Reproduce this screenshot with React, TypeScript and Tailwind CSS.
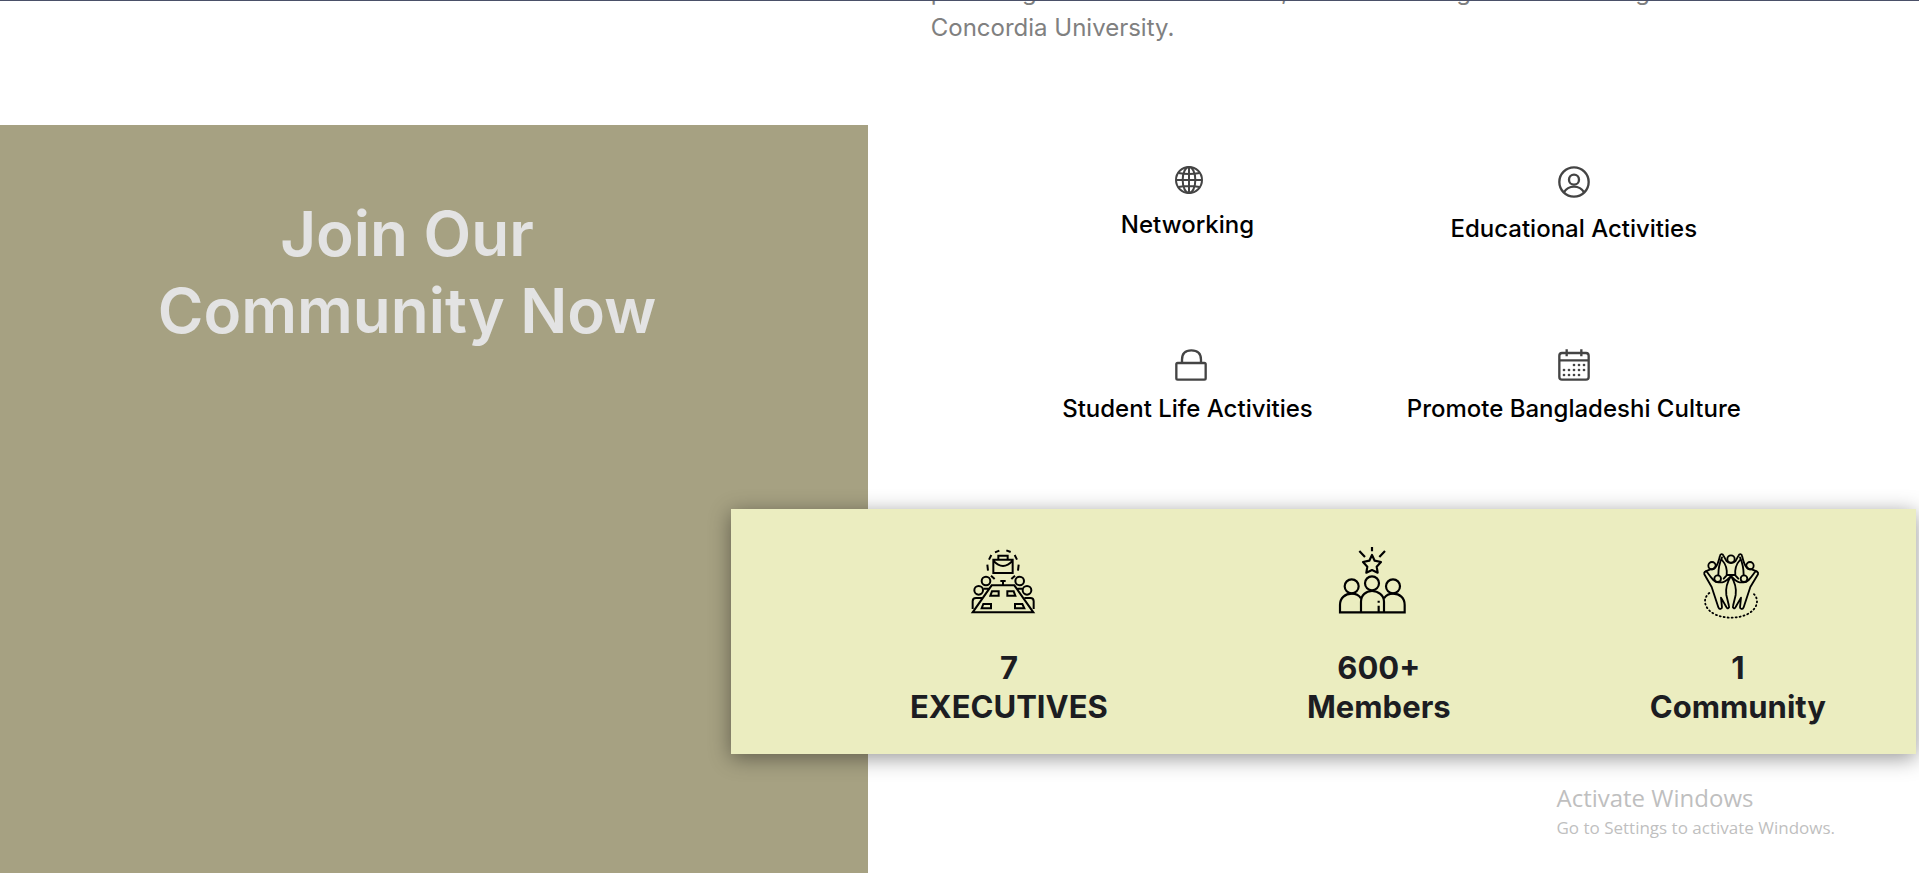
import type { ReactNode } from "react";

function GlobeIcon() {
  return (
    <svg viewBox="225 49 84 84" className="mb-[13px] ml-1 size-7 text-[#444444]" fill="none" stroke="currentColor" strokeWidth="6" aria-hidden="true">
      <circle cx="267" cy="91" r="39" />
      <ellipse cx="267" cy="91" rx="19" ry="39" />
      <path d="M267 52V130M228 91H306M235 70Q267 76 299 70M235 112Q267 106 299 112" />
    </svg>
  );
}

function UserIcon() {
  return (
    <svg viewBox="382 48 96 96" className="mb-[13px] size-8 text-[#444444]" fill="none" stroke="currentColor" strokeWidth="7" aria-hidden="true">
      <circle cx="430" cy="96" r="44" />
      <circle cx="430" cy="89" r="15" />
      <path d="M399 128C407 115 418 110 430 110S453 115 461 128" />
    </svg>
  );
}

function LockIcon() {
  return (
    <svg viewBox="406 57 96 96" className="mb-[10px] ml-2 size-8 text-[#444444]" fill="none" stroke="currentColor" strokeWidth="7" aria-hidden="true">
      <rect x="410" y="99" width="88" height="50" rx="4" />
      <path d="M427 98V89C427 70 438 61 455 61S484 70 484 89V98" />
    </svg>
  );
}

function CalendarIcon() {
  return (
    <svg viewBox="502 57 96 96" className="mb-[10px] size-8 text-[#444444]" fill="none" stroke="currentColor" strokeWidth="7" aria-hidden="true">
      <rect x="506" y="69" width="88" height="80" rx="8" />
      <path d="M505 91H595M528 58V79M572 58V79" />
      <path
        d="M550 105h.1M565 105h.1M580 105h.1M520 120h.1M535 120h.1M550 120h.1M565 120h.1M580 120h.1M520 135h.1M535 135h.1M550 135h.1M565 135h.1"
        strokeLinecap="round"
        strokeWidth="8"
      />
    </svg>
  );
}

function BoardroomIcon() {
  return (
    <svg viewBox="232 45 216 216" className="size-[72px]" fill="none" stroke="currentColor" strokeWidth="6" aria-hidden="true">
      <path d="M316 67L329 62M350 61L363 66M375 75L382 89M387 104L385 122M305 75L298 89M293 104L295 122M304 137L315 147M376 137L365 147" />
      <path d="M311 89H369V129H311ZM326 89V77H354V89M311 92Q340 124 369 92" />
      <circle cx="289" cy="153" r="13" />
      <circle cx="390" cy="153" r="13" />
      <circle cx="267" cy="181" r="13" />
      <circle cx="412" cy="181" r="13" />
      <path d="M306 166H374L431 247H249ZM332 153H348M340 153V166M281 176H300M380 176H398" />
      <path d="M307 184H327V197H302ZM353 184H372L377 197H353ZM281 222H304V235H276ZM376 222H398L404 235H376Z" />
      <path d="M249 237V214Q249 204 259 204H277M432 237V214Q432 204 422 204H404" />
    </svg>
  );
}

function MembersIcon() {
  return (
    <svg viewBox="141 44 216 216" className="size-[72px]" fill="none" stroke="currentColor" strokeWidth="6.5" aria-hidden="true">
      <path d="M246 50V63M208 62L225 80M285 62L268 80" />
      <path d="M246 74L254 91L273 95L260 109L263 127L246 119L229 127L232 109L219 95L238 91Z" strokeLinejoin="round" />
      <circle cx="185" cy="168" r="21" />
      <circle cx="246" cy="159" r="21" />
      <circle cx="309" cy="168" r="21" />
      <path d="M213 246V214C213 194 228 182 246 182S282 194 282 214V246" />
      <path d="M213 204C207 195 197 190 185 190C166 190 150 202 150 224V246H344V224C344 202 329 190 309 190C297 190 288 195 282 204M266 226V246M266 211V217" />
    </svg>
  );
}

function CommunityIcon() {
  return (
    <svg
      viewBox="199 45 216 216"
      className="size-[72px] overflow-visible"
      fill="none"
      stroke="currentColor"
      strokeWidth="5.5"
      strokeLinecap="round"
      strokeLinejoin="round"
      aria-hidden="true"
    >
      <circle cx="304" cy="87" r="11" />
      <circle cx="247" cy="107" r="11" />
      <circle cx="361" cy="107" r="11" />
      <circle cx="264" cy="146" r="10" />
      <circle cx="343" cy="146" r="10" />
      <path d="M304 138C297 145 288 156 278 157H266C252 157 244 142 232 126C228 121 222 127 224 133L246 171L266 232C268 239 277 238 277 232L274 203L290 231C293 238 300 234 298 228L290 195C287 175 290 160 304 138" />
      <path d="M304 138C311 145 320 156 330 157H342C356 157 364 142 376 126C380 121 387 127 385 133L362 171L342 232C340 239 331 238 331 232L334 203L318 231C315 238 308 234 310 228L318 195C321 175 318 160 304 138" />
      <path d="M228 124L242 118C258 118 264 106 271 77C272 71 279 71 281 76L291 94C296 101 312 101 317 94L327 76C329 71 336 71 337 77C344 106 350 118 366 118L381 124" />
      <path d="M277 82C268 102 266 118 266 135M277 90C288 102 293 120 291 136L282 146M331 82C340 102 342 118 342 135M331 90C320 102 315 120 317 136L326 146M291 135H317" />
      <path d="M239 189C215 208 226 240 258 254C286 266 322 266 350 254C382 240 393 208 369 189" strokeDasharray="3 9" />
    </svg>
  );
}

function Feature({ icon, label }: { icon: ReactNode; label: string }) {
  return (
    <li className="flex flex-col items-center">
      {icon}
      <span className="text-2xl/9 font-medium whitespace-nowrap text-black">{label}</span>
    </li>
  );
}

function Stat({ icon, value, label }: { icon: ReactNode; value: string; label: string }) {
  return (
    <li className="flex flex-col items-center text-black">
      <div className="pr-3">{icon}</div>
      <p className="mt-[31px] text-center text-[31px]/[39px] font-bold text-[#1c1d22]">
        {value}
        <br />
        {label}
      </p>
    </li>
  );
}

export default function App() {
  return (
    <main className="relative flex min-h-screen flex-col overflow-hidden border-t border-[#4a5068] bg-white font-['Inter',sans-serif]">
      <section className="flex overflow-hidden pb-[79px]">
        <div className="w-[48.5%] shrink-0" />
        <p className="-mt-[27px] text-2xl/9 whitespace-nowrap text-[#808080]">
          providing students with culture, and networking while attending
          <br />
          Concordia University.
        </p>
      </section>

      <section className="flex grow">
        <div className="w-[868px] max-w-[45.25%] shrink-0 bg-[#a6a182] pt-[70px]">
          <h1 className="pr-[54px] text-center text-[62px]/[77px] font-semibold text-[#e3e3e3]">
            Join Our
            <br />
            Community Now
          </h1>
        </div>
        <ul className="grid grow auto-rows-min grid-cols-[auto_auto] justify-center gap-x-[94px] gap-y-[102px] pt-[41px] pl-4">
          <Feature icon={<GlobeIcon />} label="Networking" />
          <Feature icon={<UserIcon />} label="Educational Activities" />
          <Feature icon={<LockIcon />} label="Student Life Activities" />
          <Feature icon={<CalendarIcon />} label="Promote Bangladeshi Culture" />
        </ul>
      </section>

      <ul className="absolute top-[508px] right-[3px] left-[731px] flex justify-between bg-[#ebedc0] pt-9 pr-[90px] pb-[28px] pl-[179px] shadow-[0_4px_20px_rgba(0,0,0,0.42)]">
        <Stat icon={<BoardroomIcon />} value="7" label="EXECUTIVES" />
        <Stat icon={<MembersIcon />} value="600+" label="Members" />
        <Stat icon={<CommunityIcon />} value="1" label="Community" />
      </ul>

      <aside className="absolute right-[84px] bottom-[31px] font-['Open_Sans','Noto_Sans',sans-serif] text-[#bfbfbf]">
        <p className="text-2xl/8">Activate Windows</p>
        <p className="text-[17px]/7">Go to Settings to activate Windows.</p>
      </aside>
    </main>
  );
}
